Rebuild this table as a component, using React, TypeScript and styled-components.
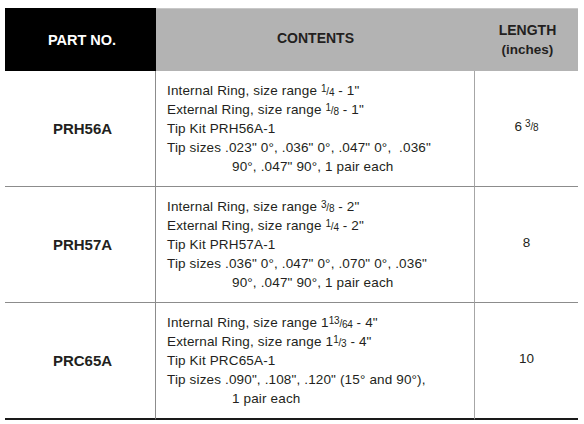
import React from 'react';
import styled, { createGlobalStyle } from 'styled-components';

interface Kit {
  part: string;
  lines: React.ReactNode[];
  cont: React.ReactNode;
  length: React.ReactNode;
}

const GlobalStyle = createGlobalStyle`
  body {
    margin: 0;
    background: #ffffff;
    font-family: "Liberation Sans", Arial, Helvetica, sans-serif;
    color: #231f20;
  }
`;

const Page = styled.div`
  padding: 8px 6px 0 5px;
`;

const Table = styled.div`
  display: grid;
  grid-template-columns: 151px 319px 103px;
  width: 573px;
`;

const PartHead = styled.div`
  height: 63px;
  background: #000000;
  color: #ffffff;
  font-weight: bold;
  font-size: 14.5px;
  display: flex;
  align-items: center;
  justify-content: center;
  padding-left: 3px;
  box-sizing: border-box;
`;

const GrayHead = styled.div<{ $last?: boolean }>`
  height: 63px;
  background: #b3b3b3;
  border-top: 1px solid #c8c8c8;
  box-sizing: border-box;
  font-weight: bold;
  font-size: 14px;
  color: #231f20;
  display: flex;
  flex-direction: column;
  align-items: center;
  justify-content: center;
  line-height: 19px;
  padding-bottom: ${(p) => (p.$last ? '0' : '3px')};
  padding-left: ${(p) => (p.$last ? '2px' : '0')};
`;

const Sub = styled.span`
  font-size: 13.5px;
`;

const Cell = styled.div<{ $bottom?: boolean }>`
  border-bottom: ${(p) => (p.$bottom ? '2px solid #1a1a1a' : '1px solid #8c8c8c')};
  box-sizing: border-box;
`;

const PartCell = styled(Cell)`
  display: flex;
  align-items: center;
  justify-content: center;
  padding-left: 5px;
  font-weight: bold;
  font-size: 15px;
  border-right: 1px solid #8c8c8c;
`;

const ContentsCell = styled(Cell)`
  padding: 10px 0 10px 11px;
  font-size: 13.5px;
  letter-spacing: 0.15px;
  line-height: 19px;
  border-right: 1px solid #a6a6a6;
`;

const LengthCell = styled(Cell)`
  display: flex;
  align-items: center;
  justify-content: center;
  font-size: 13.5px;
  padding-bottom: 4px;
`;

const Line = styled.div<{ $indent?: boolean }>`
  white-space: nowrap;
  height: 19px;
  padding-left: ${(p) => (p.$indent ? '65px' : '0')};
`;

const Gap = styled.span`
  display: inline-block;
  width: 3px;
`;

const FracWrap = styled.span`
  font-size: 10px;
  line-height: 0;
  letter-spacing: -0.2px;
`;

const Num = styled.span`
  position: relative;
  top: -3px;
`;

const Den = styled.span`
  position: relative;
  top: 1px;
`;

const Frac: React.FC<{ n: string; d: string }> = ({ n, d }) => (
  <FracWrap>
    <Num>{n}</Num>/<Den>{d}</Den>
  </FracWrap>
);

const kits: Kit[] = [
  {
    part: 'PRH56A',
    lines: [
      <>Internal Ring, size range <Frac n="1" d="4" /> - 1"</>,
      <>External Ring, size range <Frac n="1" d="8" /> - 1"</>,
      <>Tip Kit PRH56A-1</>,
      <>Tip sizes .023" 0°, .036" 0°, .047" 0°,&nbsp; .036"</>,
    ],
    cont: <>90°, .047" 90°, 1 pair each</>,
    length: <>6<Gap /><Frac n="3" d="8" /></>,
  },
  {
    part: 'PRH57A',
    lines: [
      <>Internal Ring, size range <Frac n="3" d="8" /> - 2"</>,
      <>External Ring, size range <Frac n="1" d="4" /> - 2"</>,
      <>Tip Kit PRH57A-1</>,
      <>Tip sizes .036" 0°, .047" 0°, .070" 0°, .036"</>,
    ],
    cont: <>90°, .047" 90°, 1 pair each</>,
    length: <>8</>,
  },
  {
    part: 'PRC65A',
    lines: [
      <>Internal Ring, size range 1<Frac n="13" d="64" /> - 4"</>,
      <>External Ring, size range 1<Frac n="1" d="3" /> - 4"</>,
      <>Tip Kit PRC65A-1</>,
      <>Tip sizes .090", .108", .120" (15° and 90°),</>,
    ],
    cont: <>1 pair each</>,
    length: <>10</>,
  },
];

export default function App() {
  return (
    <Page>
      <GlobalStyle />
      <Table>
        <PartHead>PART NO.</PartHead>
        <GrayHead>CONTENTS</GrayHead>
        <GrayHead $last>
          <span>LENGTH</span>
          <Sub>(inches)</Sub>
        </GrayHead>
        {kits.map((kit, i) => (
          <React.Fragment key={kit.part}>
            <PartCell $bottom={i === kits.length - 1}>{kit.part}</PartCell>
            <ContentsCell $bottom={i === kits.length - 1}>
              {kit.lines.map((line, j) => (
                <Line key={j}>{line}</Line>
              ))}
              <Line $indent>{kit.cont}</Line>
            </ContentsCell>
            <LengthCell $bottom={i === kits.length - 1}>{kit.length}</LengthCell>
          </React.Fragment>
        ))}
      </Table>
    </Page>
  );
}
